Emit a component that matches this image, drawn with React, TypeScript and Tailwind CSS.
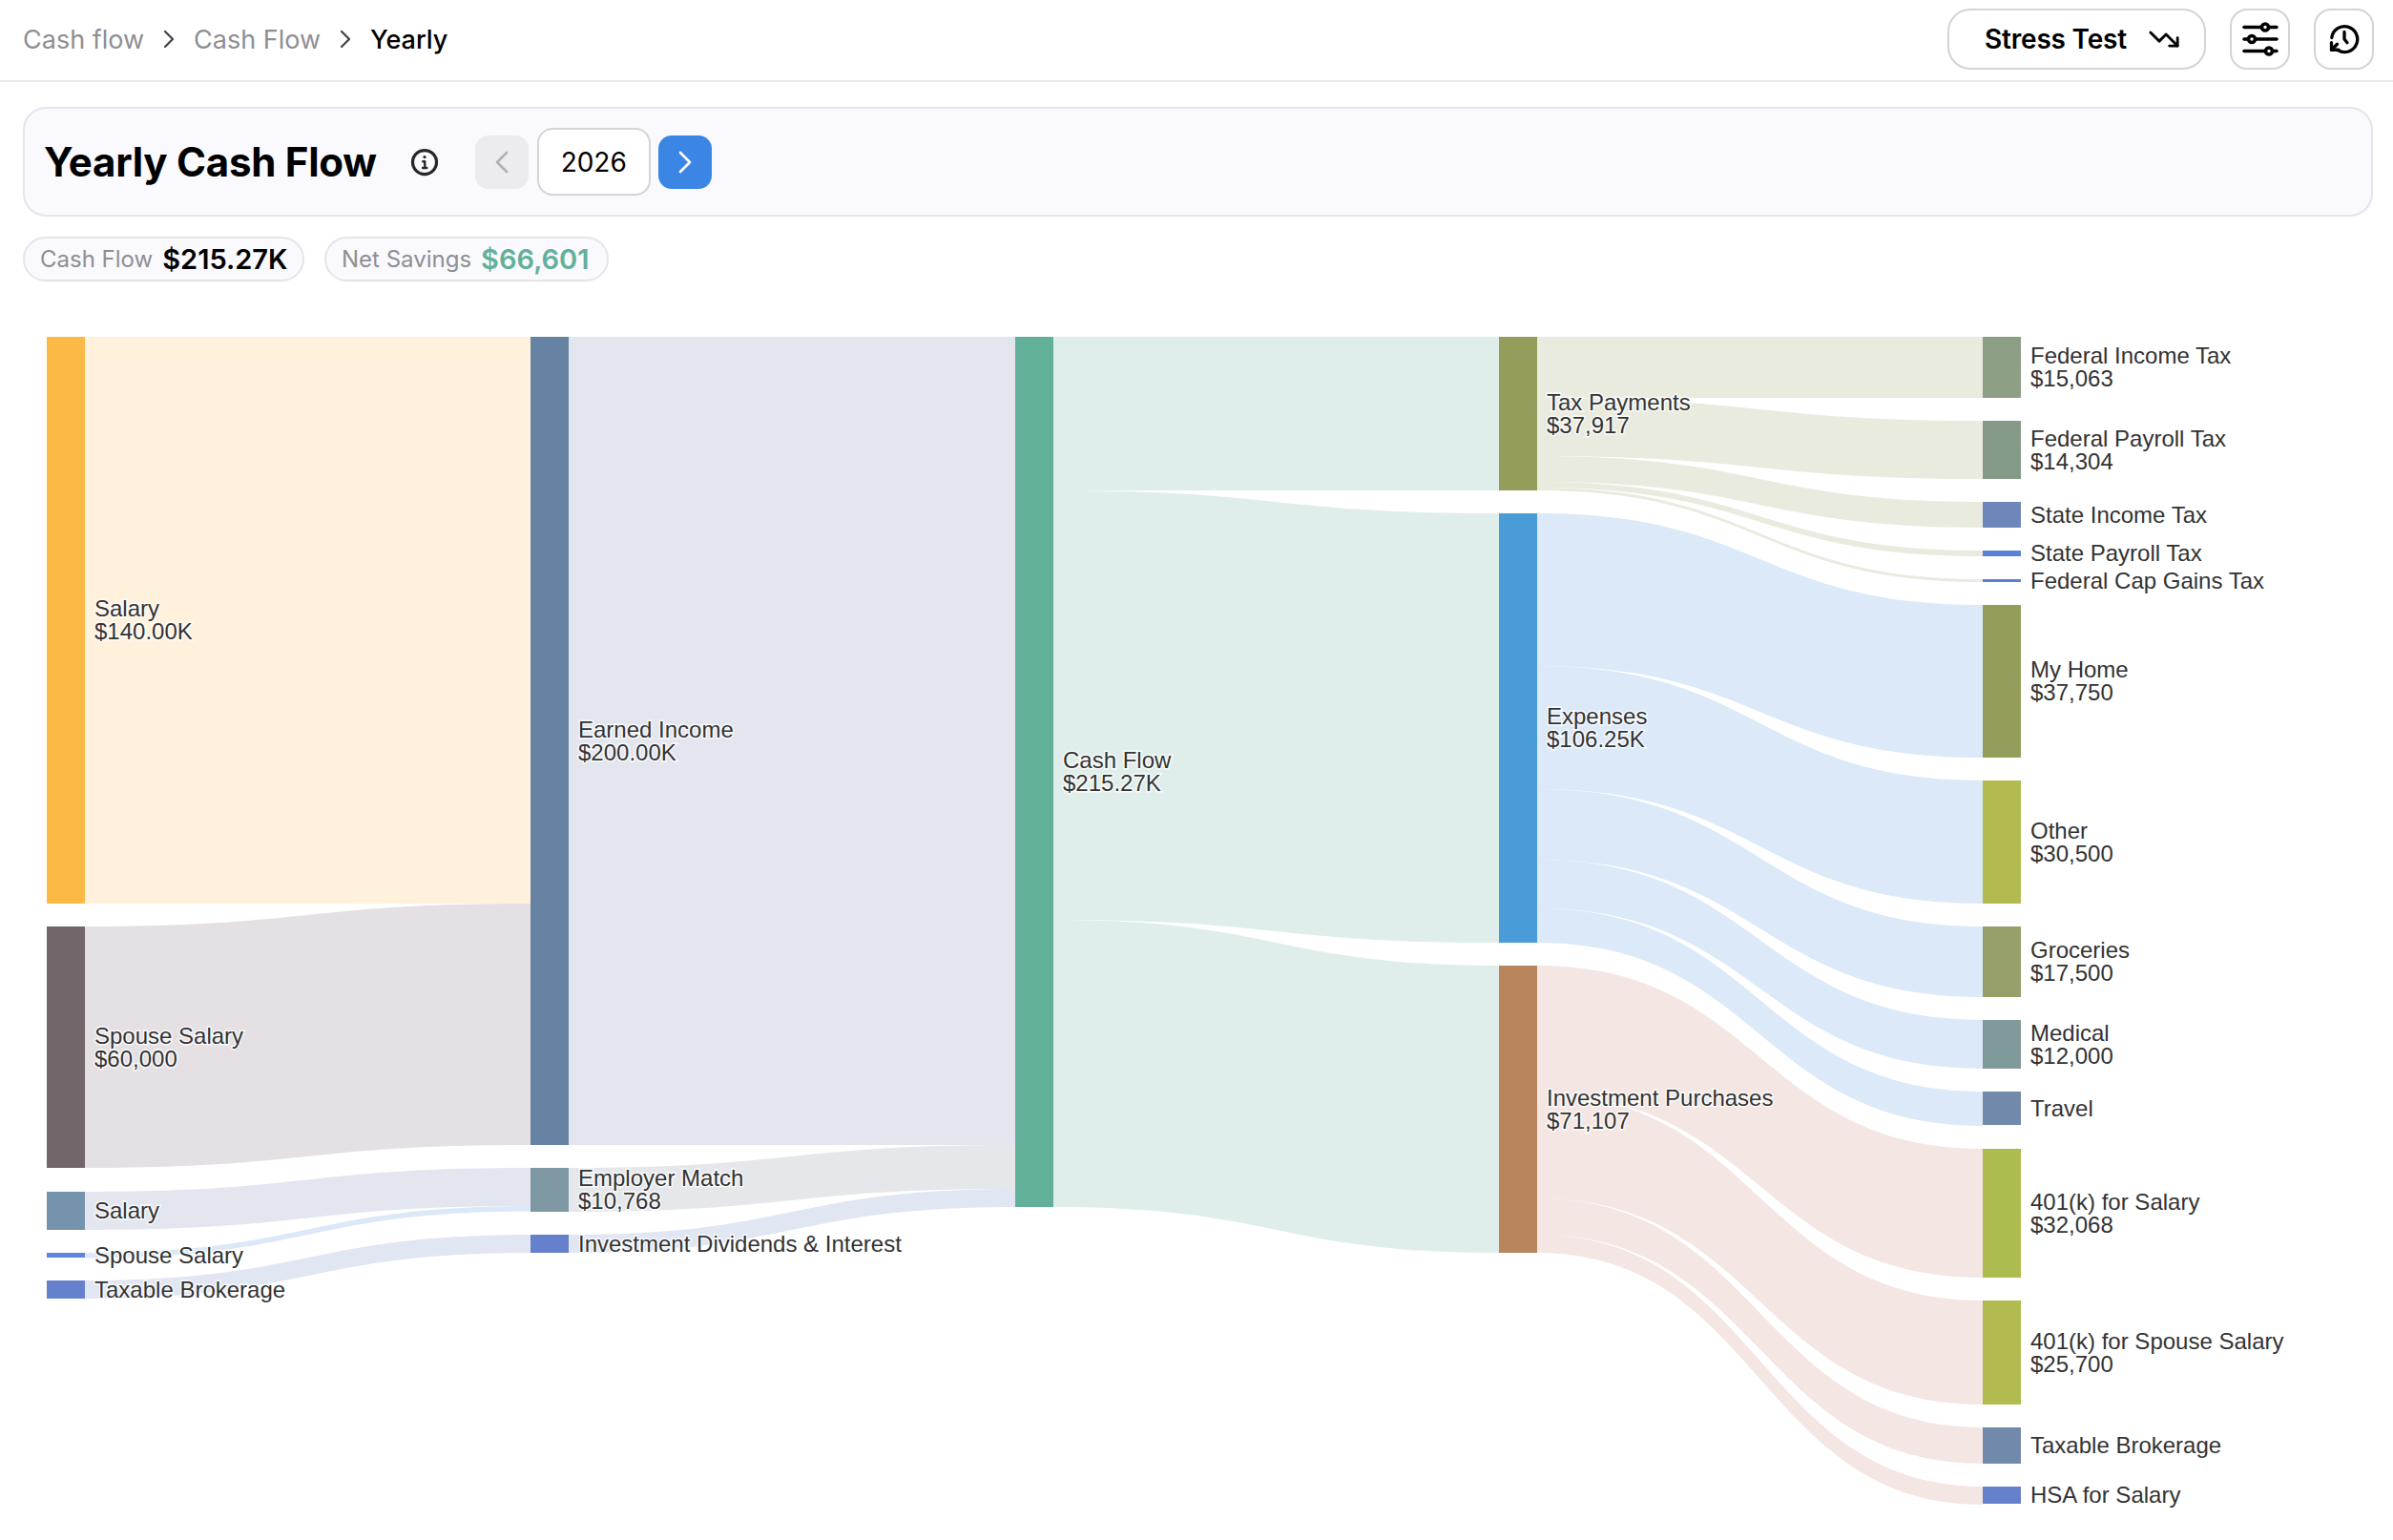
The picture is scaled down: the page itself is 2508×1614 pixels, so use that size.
import React from "react";
import { ChevronLeft, ChevronRight, TrendingDown } from "lucide-react";

type N = { x: number; y0: number; y1: number; c: string; lines: string[] };
const X = [49, 556, 1064, 1571, 2078];
const W = 40;
const nodes: N[] = [
  { x: X[0], y0: 353, y1: 947, c: "#fdb945", lines: ["Salary", "$140.00K"] },
  { x: X[0], y0: 971, y1: 1224, c: "#72666b", lines: ["Spouse Salary", "$60,000"] },
  { x: X[0], y0: 1249, y1: 1289, c: "#7593ad", lines: ["Salary"] },
  { x: X[0], y0: 1313, y1: 1318, c: "#5f85d8", lines: ["Spouse Salary"] },
  { x: X[0], y0: 1342, y1: 1361, c: "#6681cc", lines: ["Taxable Brokerage"] },
  { x: X[1], y0: 353, y1: 1200, c: "#6683a4", lines: ["Earned Income", "$200.00K"] },
  { x: X[1], y0: 1224, y1: 1270, c: "#7d97a3", lines: ["Employer Match", "$10,768"] },
  { x: X[1], y0: 1294, y1: 1313, c: "#6681cc", lines: ["Investment Dividends & Interest"] },
  { x: X[2], y0: 353, y1: 1265, c: "#62b09a", lines: ["Cash Flow", "$215.27K"] },
  { x: X[3], y0: 353, y1: 514, c: "#959d5a", lines: ["Tax Payments", "$37,917"] },
  { x: X[3], y0: 538, y1: 988, c: "#4a9cd9", lines: ["Expenses", "$106.25K"] },
  { x: X[3], y0: 1012, y1: 1313, c: "#b8855c", lines: ["Investment Purchases", "$71,107"] },
  { x: X[4], y0: 353, y1: 417, c: "#8c9f85", lines: ["Federal Income Tax", "$15,063"] },
  { x: X[4], y0: 441, y1: 502, c: "#849a87", lines: ["Federal Payroll Tax", "$14,304"] },
  { x: X[4], y0: 526, y1: 553, c: "#6e87bb", lines: ["State Income Tax"] },
  { x: X[4], y0: 577, y1: 583, c: "#5c80d3", lines: ["State Payroll Tax"] },
  { x: X[4], y0: 607, y1: 610, c: "#5c80d3", lines: ["Federal Cap Gains Tax"] },
  { x: X[4], y0: 634, y1: 794, c: "#959d5a", lines: ["My Home", "$37,750"] },
  { x: X[4], y0: 818, y1: 947, c: "#b1bb4f", lines: ["Other", "$30,500"] },
  { x: X[4], y0: 971, y1: 1045, c: "#969f6a", lines: ["Groceries", "$17,500"] },
  { x: X[4], y0: 1069, y1: 1120, c: "#7f9a98", lines: ["Medical", "$12,000"] },
  { x: X[4], y0: 1144, y1: 1179, c: "#7189ab", lines: ["Travel"] },
  { x: X[4], y0: 1204, y1: 1339, c: "#aebb4e", lines: ["401(k) for Salary", "$32,068"] },
  { x: X[4], y0: 1363, y1: 1472, c: "#b1bb4f", lines: ["401(k) for Spouse Salary", "$25,700"] },
  { x: X[4], y0: 1496, y1: 1534, c: "#7189ab", lines: ["Taxable Brokerage"] },
  { x: X[4], y0: 1558, y1: 1576, c: "#6681cc", lines: ["HSA for Salary"] },
];

// col, source top, target top, thickness, colour
const links: [number, number, number, number, string][] = [
  [0, 353, 353, 594, "#fff1dc"],
  [0, 971, 947, 253, "#e5e0e4"],
  [0, 1249, 1224, 40, "#e3e6ef"],
  [0, 1313, 1264, 5.5, "#dbe8f8"],
  [0, 1342, 1294, 19, "#e0e6f2"],
  [1, 353, 353, 847, "#e3e6ef"],
  [1, 1224, 1200, 46, "#e5e7ea"],
  [1, 1294, 1246, 19, "#e0e6f2"],
  [2, 353, 353, 161, "#dfeeea"],
  [2, 514, 538, 450, "#dfeeea"],
  [2, 964, 1012, 301, "#dfeeea"],
  [3, 353, 353, 64, "#e9ebdf"],
  [3, 417, 441, 61, "#e9ebdf"],
  [3, 478, 526, 27, "#e9ebdf"],
  [3, 505, 577, 6, "#e9ebdf"],
  [3, 511, 607, 3, "#e9ebdf"],
  [3, 538, 634, 160, "#dbe9f8"],
  [3, 698, 818, 129, "#dbe9f8"],
  [3, 827, 971, 74, "#dbe9f8"],
  [3, 901, 1069, 51, "#dbe9f8"],
  [3, 952, 1144, 36, "#dbe9f8"],
  [3, 1012, 1204, 135, "#f3e6e3"],
  [3, 1147, 1363, 109, "#f3e6e3"],
  [3, 1256, 1496, 38, "#f3e6e3"],
  [3, 1294, 1558, 19, "#f3e6e3"],
];

function Sankey() {
  return (
    <svg width={2508} height={1304} viewBox="0 310 2508 1304" className="block">
      {links.map(([col, s, t, th, c], i) => {
        const x0 = X[col] + W;
        const x1 = X[col + 1];
        const mx = (x0 + x1) / 2;
        return (
          <path
            key={i}
            d={`M${x0},${s}C${mx},${s} ${mx},${t} ${x1},${t}L${x1},${t + th}C${mx},${t + th} ${mx},${s + th} ${x0},${s + th}Z`}
            fill={c}
          />
        );
      })}
      {nodes.map((n, i) => (
        <rect key={i} x={n.x} y={n.y0} width={W} height={n.y1 - n.y0} fill={n.c} />
      ))}
      {nodes.map((n, i) => {
        const cy = (n.y0 + n.y1) / 2;
        return n.lines.map((l, j) => (
          <text
            key={`${i}-${j}`}
            x={n.x + W + 10}
            y={cy + (n.lines.length === 2 ? (j === 0 ? -12 : 12) : 0) + 8}
            fontFamily='"Liberation Sans", Arial, sans-serif'
            fontSize={24}
            fill="#333"
            stroke="#fff"
            strokeWidth={3}
            strokeOpacity={0.8}
            style={{ paintOrder: "stroke" }}
          >
            {l}
          </text>
        ));
      })}
    </svg>
  );
}

function SlidersIcon() {
  return (
    <svg width="40" height="40" viewBox="0 0 40 40" fill="none" stroke="#000" strokeWidth="3.6" strokeLinecap="round">
      <path d="M3 7.5h17M30 7.5h7M3 20h3M16 20h21M3 32.5h21M34 32.5h3" />
      <circle cx="25" cy="7.5" r="3.5" />
      <circle cx="11" cy="20" r="3.5" />
      <circle cx="29" cy="32.5" r="3.5" />
    </svg>
  );
}

function HistoryIcon() {
  return (
    <svg width="36" height="36" viewBox="0 0 24 24" fill="none" stroke="#000" strokeWidth="2.2" strokeLinecap="round" strokeLinejoin="round">
      <path d="M3.2 11A9 9 0 1 1 7.5 19.8" />
      <path d="M3 14.5V19.5h5" />
      <path d="M3 19.5L7 15.5" />
      <path d="M12 7v5l2 2.5" />
    </svg>
  );
}

function InfoIcon() {
  return (
    <svg width="30" height="30" viewBox="0 0 24 24" fill="none" stroke="#27272a" strokeWidth="2.6" strokeLinecap="round" strokeLinejoin="round">
      <circle cx="12" cy="12" r="10" />
      <path d="M10.6 11.4H12.2V16.6M10.4 16.8H13.8" strokeWidth="1.9" />
      <circle cx="12" cy="7.6" r="0.7" fill="#27272a" strokeWidth="1.2" />
    </svg>
  );
}

export default function App() {
  return (
    <div className="w-[2508px] h-[1614px] bg-white overflow-hidden font-['Inter',sans-serif]">
      <header className="h-[86px] border-b-2 border-[#e8e9ee] flex items-center justify-between pl-6 pr-[20px]">
        <nav className="flex items-center text-[27px] leading-none mt-[-2px]">
          <span className="text-[#8e8e93]">Cash flow</span>
          <ChevronRight className="mx-[10px] text-[#3f3f46]" size={32} strokeWidth={1.6} />
          <span className="text-[#8e8e93]">Cash Flow</span>
          <ChevronRight className="mx-[10px] text-[#3f3f46]" size={32} strokeWidth={1.6} />
          <span className="text-black font-medium">Yearly</span>
        </nav>
        <div className="flex items-center gap-[25px] mt-[-3px]">
          <button className="w-[271px] h-[64px] rounded-[24px] border-2 border-[#d4d4d8] bg-white flex items-center justify-center gap-[22px] pl-[12px] text-[28px] font-semibold tracking-[-0.2px] text-black">
            Stress Test
            <TrendingDown size={34} strokeWidth={2} />
          </button>
          <button className="w-[63px] h-[64px] rounded-[18px] border-2 border-[#d4d4d8] bg-white flex items-center justify-center">
            <SlidersIcon />
          </button>
          <button className="w-[63px] h-[64px] rounded-[18px] border-2 border-[#d4d4d8] bg-white flex items-center justify-center">
            <HistoryIcon />
          </button>
        </div>
      </header>
      <main className="pl-6 pr-[21px] pt-[26px]">
        <section className="h-[115px] rounded-[24px] border-2 border-[#e4e4ea] bg-[#f9f9fe] flex items-center pl-[20px]">
          <h1 className="text-[42px] leading-none font-bold text-black tracking-[-0.25px]">Yearly Cash Flow</h1>
          <span className="ml-[35px] flex"><InfoIcon /></span>
          <button className="ml-[38px] w-[56px] h-[56px] rounded-[14px] bg-[#ececef] flex items-center justify-center text-[#b0b0b5]">
            <ChevronLeft size={40} strokeWidth={1.6} />
          </button>
          <div className="ml-[9px] w-[119px] h-[71px] rounded-[16px] border-2 border-[#d4d4d8] bg-white flex items-center justify-center text-[28px] text-black">2026</div>
          <button className="ml-[8px] w-[56px] h-[56px] rounded-[14px] bg-[#3b86e4] flex items-center justify-center text-white">
            <ChevronRight size={40} strokeWidth={1.6} />
          </button>
        </section>
        <div className="flex gap-[21px] mt-[21px]">
          <div className="h-[47px] w-[295px] rounded-full border-2 border-[#e4e4ea] bg-[#f9f9fe] flex items-center pl-[16px]">
            <span className="text-[24px] text-[#8e8e93]">Cash Flow</span>
            <span className="ml-[10px] text-[29px] font-semibold text-black">$215.27K</span>
          </div>
          <div className="h-[47px] w-[298px] rounded-full border-2 border-[#e4e4ea] bg-[#f9f9fe] flex items-center pl-[16px]">
            <span className="text-[24px] text-[#8e8e93]">Net Savings</span>
            <span className="ml-[10px] text-[29px] font-semibold text-[#62b09a]">$66,601</span>
          </div>
        </div>
      </main>
      <div className="mt-[15px]">
        <Sankey />
      </div>
    </div>
  );
}
